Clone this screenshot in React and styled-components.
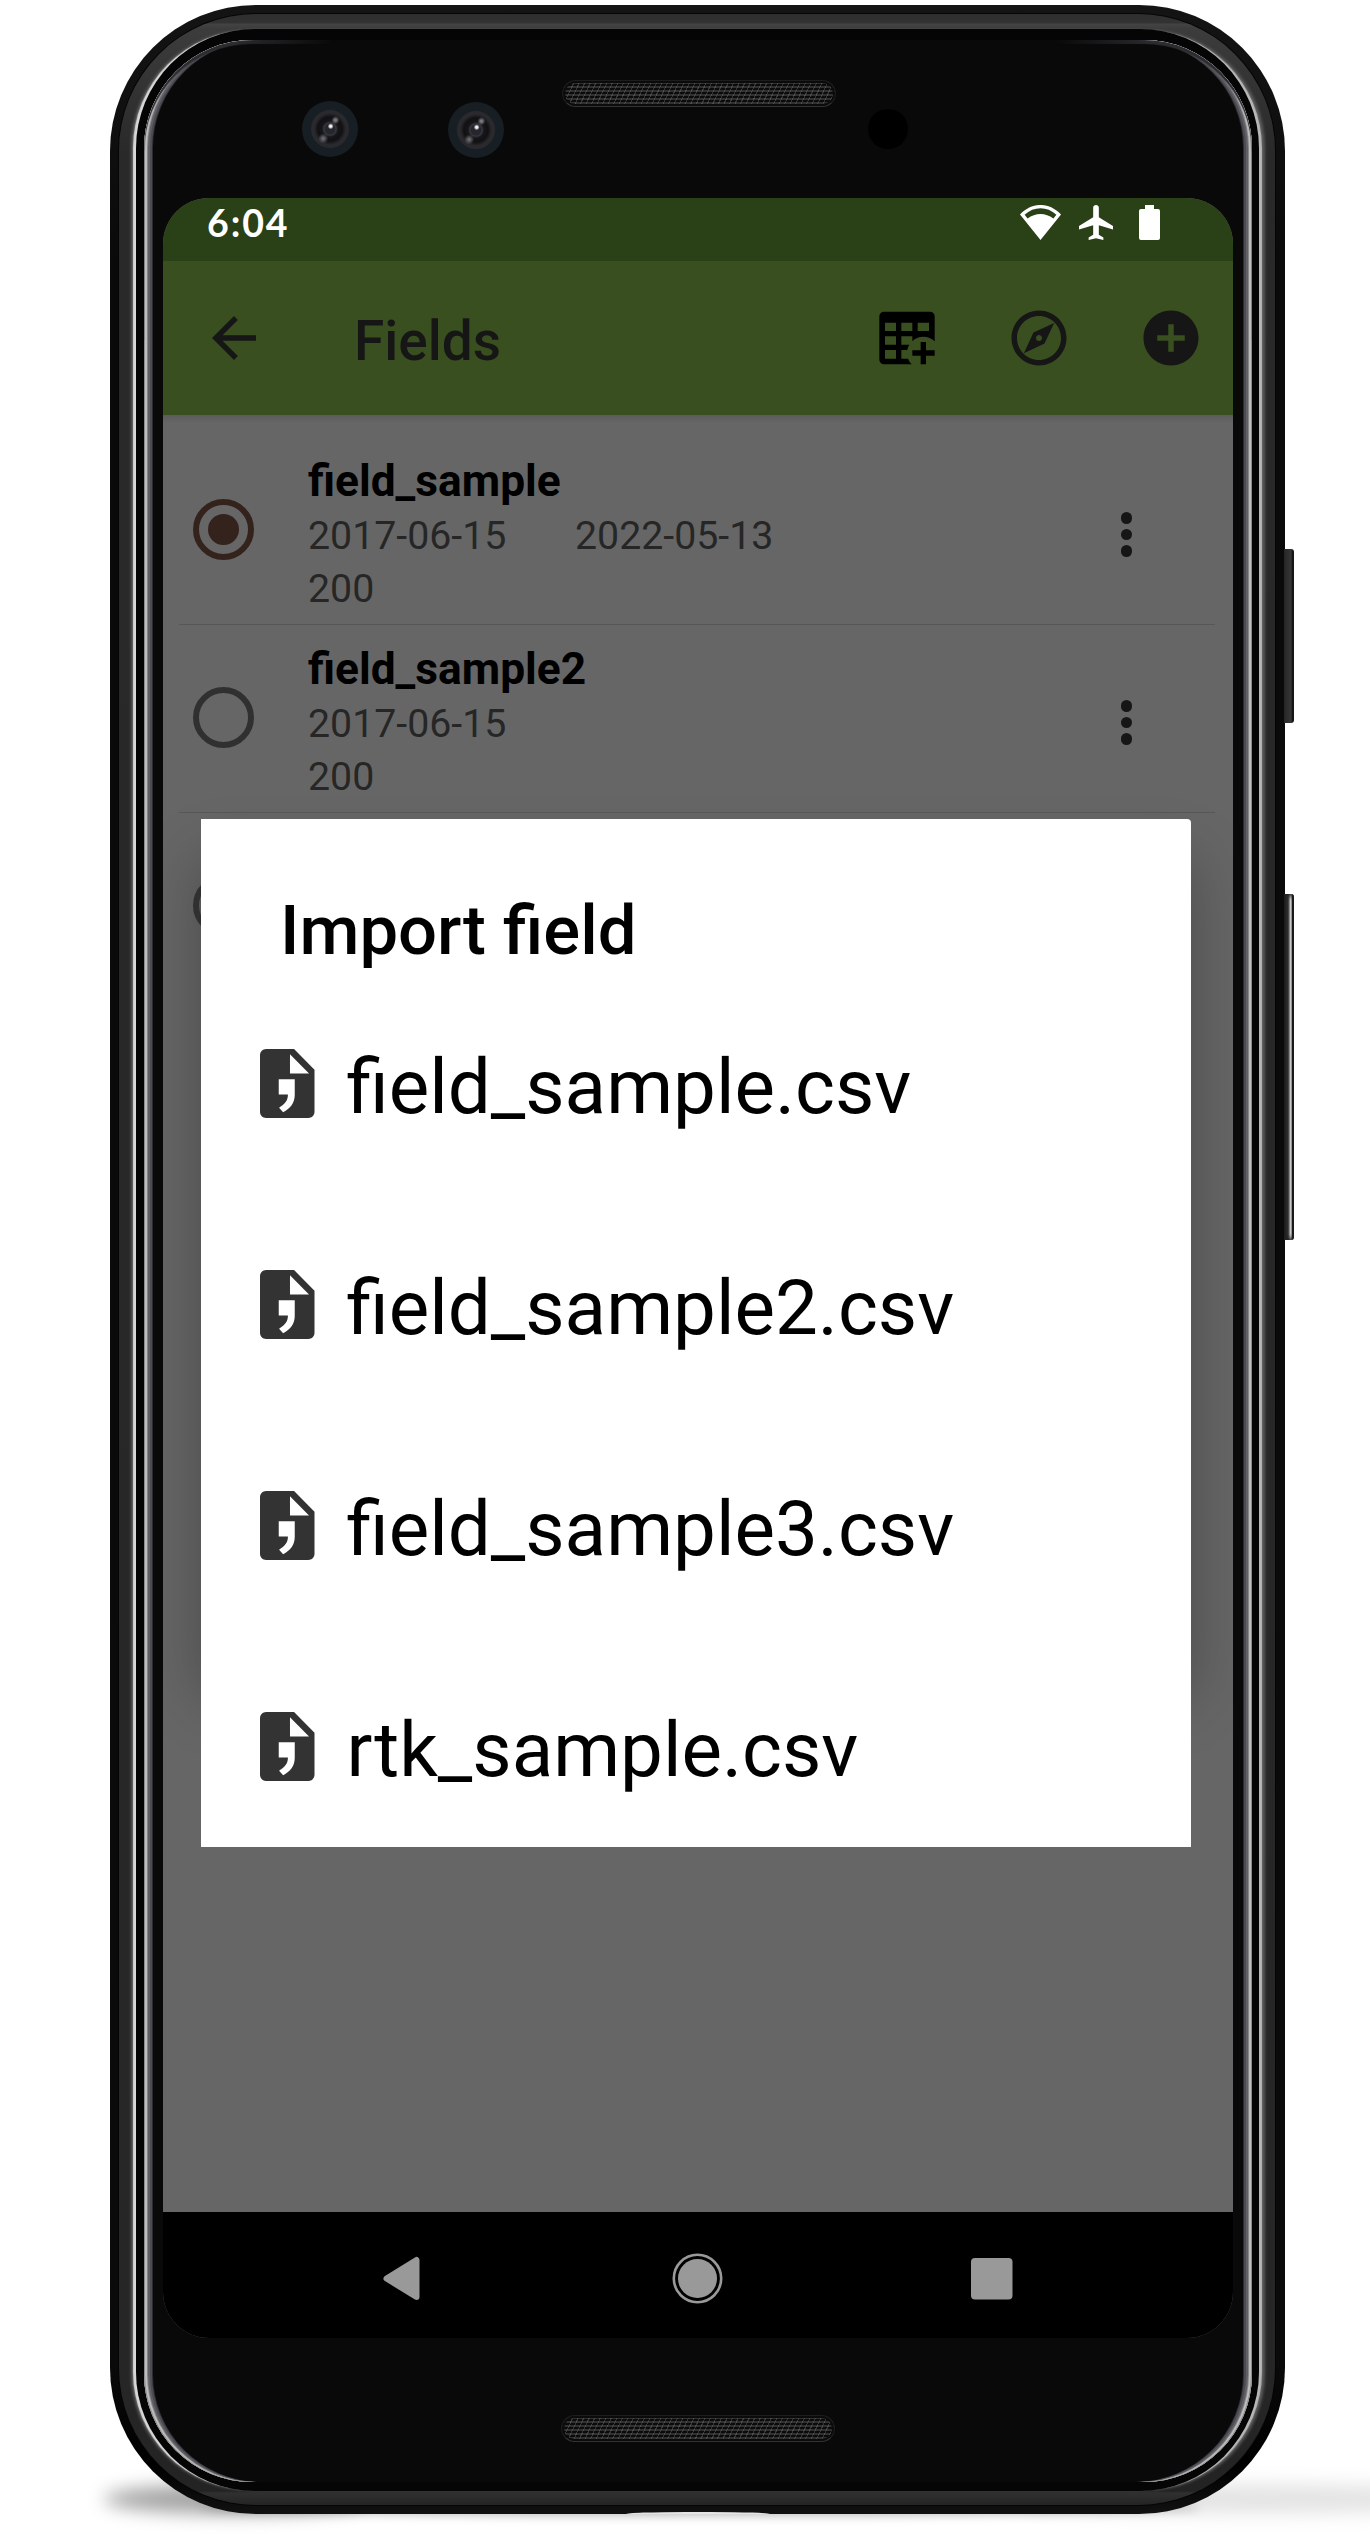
import React from "react";
import styled, { createGlobalStyle, css } from "styled-components";

const GlobalStyle = createGlobalStyle`
  *, *::before, *::after { box-sizing: border-box; }
  body { margin: 0; background: #fff; font-family: Roboto, "Noto Sans", sans-serif; }
`;

const Stage = styled.main`
  position: relative;
  width: 1370px;
  height: 2534px;
  padding: 5px 85px 0 110px;
  overflow: hidden;
  background: #fff;
`;

const FloorShadow = styled.div`
  position: absolute;
  left: ${(p) => p.$left}px;
  top: ${(p) => p.$top}px;
  width: ${(p) => p.$width}px;
  height: ${(p) => p.$height}px;
  border-radius: 50%;
  background: rgba(0, 0, 0, ${(p) => p.$strength});
  filter: blur(${(p) => p.$blur}px);
`;

const Body = styled.div`
  position: relative;
  width: 1175px;
  height: 2509px;
  padding: 9px 10px 9px 9px;
  border-radius: 146px;
  background: linear-gradient(#141414, #0a0a0a 10%, #0a0a0a 94%, #000 98%, #111);
`;

const Rim = styled.div`
  height: 100%;
  padding: 15px 16px 14px 17px;
  border-radius: 137px;
  background: linear-gradient(#2e2e2e, #333 9px, #434343 10px, #3c3c3c 15px, #292929 140px, #262626 2380px, #232323 2477px, #303030 2479px, #242424);
  box-shadow: 0 0 0 1px #050505;
`;

const Gap = styled.div`
  height: 100%;
  padding: 11px 7px 9px 8px;
  border-radius: 119px;
  background: #050505;
  box-shadow: -4px 0 1px -1px #d8d8d8, 4px 0 1px -1px #b8b8b8, -6px 0 3px -1px #5a5a5a, 7px 0 3px -1px #5a5a5a;
`;

const Glass = styled.div`
  position: relative;
  display: flex;
  flex-direction: column;
  height: 100%;
  padding: 0 19px;
  border-radius: 108px;
  background: #090909;
  box-shadow:
    inset 1px 0 #8c8c8c, inset -1px 0 #8c8c8c,
    inset 3px 0 #bdbdbd, inset -3px 0 #bdbdbd,
    inset 4px 0 #858588, inset -4px 0 #858588,
    inset 6px 0 #5f5f65, inset -6px 0 #5f5f65,
    inset 8px 0 #4b4b52, inset -8px 0 #4b4b52,
    inset 9px 0 #2c2c30, inset -9px 0 #2c2c30;

  &::before {
    content: "";
    position: absolute;
    inset: 0;
    height: 300px;
    border-radius: 108px 108px 0 0;
    box-shadow: inset 0 4px 1px #2c2c31;
    mask-image: linear-gradient(to right, #000 90px, transparent 190px, transparent 910px, #000 1010px);
  }
`;

const TopBezel = styled.div`
  display: flex;
  flex: none;
  align-items: flex-start;
  height: 158px;
  padding-left: 139px;
`;

const Lens = styled.div`
  flex: none;
  width: 56px;
  height: 56px;
  margin-top: ${(p) => p.$drop}px;
  margin-right: ${(p) => p.$after}px;
  padding: 9px;
  border-radius: 50%;
  background: #171e24;
`;

const LensGlass = styled.div`
  height: 38px;
  border-radius: 50%;
  border: 2px solid #2a2a2e;
  background:
    radial-gradient(circle at 52% 42%, #f5f5f5 0 1px, transparent 3px),
    radial-gradient(circle at 66% 24%, #77777c 0 1px, transparent 4px),
    radial-gradient(circle at 30% 78%, #66666b 0 1px, transparent 5px),
    radial-gradient(circle, #26262e 0 5px, #38383e 6px, #17171b 8px, #111114 12px, #2b2b2f 16px);
`;

const Speaker = styled.div`
  flex: none;
  width: 274px;
  height: 27px;
  margin-top: ${(p) => p.$drop}px;
  border: 1px solid #1d1d1d;
  border-bottom-color: #333;
  border-radius: 14px;
  background:
    repeating-linear-gradient(115deg, rgba(150, 150, 150, 0.3) 0 1px, transparent 1px 5px),
    repeating-linear-gradient(0deg, #0b0b0b 0 2px, #303030 2px 4px);
  box-shadow: inset 0 0 0 2px #0b0b0b;
`;

const Sensor = styled.div`
  width: 40px;
  height: 40px;
  margin: 69px 0 0 32px;
  border-radius: 50%;
  background: #000;
`;

const BottomBezel = styled.div`
  display: flex;
  justify-content: center;
  flex: 1;
`;

const SideButton = styled.div`
  position: absolute;
  left: 1174px;
  top: ${(p) => p.$top}px;
  width: 10px;
  height: ${(p) => p.$height}px;
  border-radius: 0 3px 3px 0;
  ${(p) =>
    p.$shiny
      ? css`
          background: linear-gradient(to right, #1c1c1c, #2c2c2c 35%, #555 50%, #cfcfcf 62%, #bcbcbc 72%, #1a1a1a 84%);
          box-shadow: inset 0 5px 4px -3px #222, inset 0 -5px 4px -3px #222;
        `
      : css`
          background: linear-gradient(to right, #262626, #363636 70%, #161616 85%);
        `}
`;

const PortNotch = styled.div`
  position: absolute;
  left: 516px;
  bottom: 0;
  width: 144px;
  height: 2px;
  border-radius: 60px 60px 0 0 / 2px 2px 0 0;
  background: #e6e4e4;
`;

const Screen = styled.div`
  display: flex;
  flex: none;
  flex-direction: column;
  height: 2140px;
  border-radius: 46px;
  overflow: hidden;
  background: #666;
`;

const StatusBar = styled.header`
  display: flex;
  flex: none;
  align-items: flex-start;
  height: 63px;
  padding: 7px 65px 0 44px;
  background: #2a4118;
`;

const Clock = styled.span`
  margin-right: auto;
  margin-top: -4px;
  color: #fff;
  font-family: Lato, "Open Sans", sans-serif;
  font-weight: 700;
  font-size: 37.5px;
  line-height: 44px;
  letter-spacing: 1.9px;
`;

const StatusIcons = styled.div`
  display: flex;
  gap: 18px;
  svg { display: block; }
`;

const Toolbar = styled.div`
  display: flex;
  flex: none;
  align-items: center;
  height: 154px;
  padding: 0 29px 0 38px;
  background: #394f1f;
`;

const Glyph = styled.svg`
  display: block;
  flex: none;
  width: 66px;
  height: 66px;
  fill: ${(p) => p.$color || "#161616"};
`;

const ToolbarTitle = styled.h1`
  flex: 1;
  margin: 6px 0 0 87px;
  color: #161616;
  font-weight: 500;
  font-size: 55px;
  line-height: 64px;
`;

const Actions = styled.div`
  display: flex;
  gap: 66px;
`;

const Content = styled.section`
  position: relative;
  z-index: 0;
  flex: none;
  height: 1797px;
  padding: 22px 18px 0 16px;
  background: linear-gradient(#5b5b5b, #666 8px);
`;

const FieldRow = styled.div`
  display: flex;
  align-items: flex-start;
  height: 188px;
  border-bottom: 1px solid ${(p) => (p.$last ? "transparent" : "#575757")};
`;

const Radio = styled.div`
  display: grid;
  place-items: center;
  flex: none;
  width: 61px;
  height: 61px;
  margin: 62px 54px 0 14px;
  border: 6px solid ${(p) => (p.$checked ? "#34231d" : "#303030")};
  border-radius: 50%;
  &::after {
    content: "";
    width: 31px;
    height: 31px;
    border-radius: 50%;
    background: ${(p) => (p.$checked ? "#34231d" : "transparent")};
  }
`;

const FieldInfo = styled.div`
  flex: 1;
  padding-top: 19px;
`;

const FieldName = styled.div`
  color: #000;
  font-weight: 700;
  font-size: 44.3px;
  line-height: 50px;
  height: 54px;
`;

const FieldMeta = styled.div`
  display: flex;
  color: #262626;
  font-size: 39.3px;
  line-height: 53px;
`;

const Stamp = styled.span`
  width: 267px;
`;

const Kebab = styled.div`
  display: grid;
  gap: 5px;
  margin: 75px 83px 0 0;
`;

const Dot = styled.i`
  width: 11.5px;
  height: 11.5px;
  border-radius: 50%;
  background: #161616;
`;

const Dialog = styled.div`
  position: absolute;
  left: 38px;
  top: 404px;
  width: 990px;
  height: 1027.5px;
  padding: 77px 0 0 59px;
  border-radius: 0 4px 0 0;
  background: #fff;

  &::before {
    content: "";
    position: absolute;
    z-index: -1;
    inset: 40px 0 150px 0;
    box-shadow: 0 0 56px rgba(0, 0, 0, 0.28);
  }
`;

const DialogTitle = styled.h2`
  height: 153px;
  margin: 0 0 0 20px;
  color: #000;
  font-weight: 500;
  font-size: 68.8px;
  line-height: 70px;
`;

const FileRow = styled.div`
  display: flex;
  align-items: flex-start;
  height: 221px;
`;

const FileIcon = styled.svg`
  display: block;
  flex: none;
  width: 54.5px;
  height: 69px;
  margin-right: 32px;
  fill: #333;
`;

const FileName = styled.span`
  color: #000;
  font-size: 76.3px;
  line-height: 77px;
`;

const NavBar = styled.nav`
  display: grid;
  flex: none;
  grid-template-columns: repeat(3, 295px);
  justify-content: center;
  justify-items: center;
  padding-top: 33px;
  height: 126px;
  background: #000;
`;

const files = ["field_sample.csv", "field_sample2.csv", "field_sample3.csv", "rtk_sample.csv"];

const fields = [
  { name: "field_sample", imported: "2017-06-15", exported: "2022-05-13", count: 200, active: true },
  { name: "field_sample2", imported: "2017-06-15", count: 200 },
];

function TableAddIcon() {
  return (
    <Glyph viewBox="42 919 198 198" $color="#000">
      <mask id="badge-cut">
        <rect x="42" y="919" width="198" height="198" fill="#fff" />
        <circle cx="190" cy="1063" r="49" fill="#000" />
      </mask>
      <path
        mask="url(#badge-cut)"
        fillRule="evenodd"
        d="M72 939H210A14 14 0 0 1 224 953V1097H72A14 14 0 0 1 58 1083V953A14 14 0 0 1 72 939ZM75 972V997H108V972ZM124 972V997H157V972ZM173 972V997H207V972ZM75 1013V1038H108V1013ZM124 1013V1038H157V1013ZM75 1054V1080H108V1054ZM124 1054V1080H157V1054Z"
      />
      <path d="M182 1030h16v25h26v16h-26v26h-16v-26h-25v-16h25z" />
    </Glyph>
  );
}

function CompassIcon() {
  return (
    <Glyph viewBox="0 0 24 24">
      <path
        fillRule="evenodd"
        d="M12 2C6.48 2 2 6.48 2 12s4.48 10 10 10 10-4.48 10-10S17.52 2 12 2zm0 18c-4.41 0-8-3.59-8-8s3.59-8 8-8 8 3.59 8 8-3.59 8-8 8z"
      />
      <path
        fillRule="evenodd"
        d="M6.5 17.5l7.51-3.49L17.5 6.5 9.99 9.99zM12 10.9c.61 0 1.1.49 1.1 1.1s-.49 1.1-1.1 1.1-1.1-.49-1.1-1.1.49-1.1 1.1-1.1z"
      />
    </Glyph>
  );
}

function Field({ field }) {
  return (
    <FieldRow>
      <Radio $checked={field.active} />
      <FieldInfo>
        <FieldName>{field.name}</FieldName>
        <FieldMeta>
          <Stamp>{field.imported}</Stamp>
          {field.exported && <span>{field.exported}</span>}
        </FieldMeta>
        <FieldMeta>{field.count}</FieldMeta>
      </FieldInfo>
      <Kebab><Dot /><Dot /><Dot /></Kebab>
    </FieldRow>
  );
}

function ImportDialog() {
  return (
    <Dialog>
      <DialogTitle>Import field</DialogTitle>
      {files.map((name) => (
        <FileRow key={name}>
          <FileIcon viewBox="4 2 16 20" preserveAspectRatio="none">
            <path
              fillRule="evenodd"
              d="M14 2H5.8C4.8 2 4 2.8 4 3.8V20.2C4 21.2 4.8 22 5.8 22H18.2C19.2 22 20 21.2 20 20.2V8L14 2M12.8 3.5L18.4 9.1H12.8V3.5M9.5 10.8H14.2V15.3C14.2 17.6 12.9 19.2 10.8 20.3L9.6 19C11.3 18 12.2 17 12.2 15.2H9.5Z"
            />
          </FileIcon>
          <FileName>{name}</FileName>
        </FileRow>
      ))}
    </Dialog>
  );
}

export default function App() {
  return (
    <Stage>
      <GlobalStyle />
      <FloorShadow $left={104} $top={2484} $width={260} $height={30} $strength={0.36} $blur={9} />
      <FloorShadow $left={1020} $top={2486} $width={480} $height={26} $strength={0.12} $blur={10} />
      <FloorShadow $left={200} $top={2500} $width={1000} $height={16} $strength={0.25} $blur={5} />
      <Body>
        <SideButton $top={544} $height={174} />
        <SideButton $top={889} $height={346} $shiny />
        <Rim>
          <Gap>
            <Glass>
              <TopBezel>
                <Lens $drop={61} $after={90}><LensGlass /></Lens>
                <Lens $drop={62} $after={58}><LensGlass /></Lens>
                <Speaker $drop={40} />
                <Sensor />
              </TopBezel>
              <Screen>
                <StatusBar>
                  <Clock>6:04</Clock>
                  <StatusIcons>
                    <svg width="41" height="35" viewBox="0 0 41 35">
                      <path
                        fill="#fff"
                        fillRule="evenodd"
                        d="M0 9.5C12-3.2 29-3.2 41 9.5L20.5 35ZM4.6 9.8L7.6 13.6C15.5 7.6 25.5 7.6 33.4 13.6L36.4 9.8C27 1.2 14 1.2 4.6 9.8Z"
                      />
                    </svg>
                    <svg width="34" height="35" viewBox="2.5 2 18 20" preserveAspectRatio="none">
                      <path fill="#fff" d="M20.5 16v-2l-7.5-5V3.5c0-.83-.67-1.5-1.5-1.5S10 2.67 10 3.5V9l-7.5 5v2l7.5-2.5V19l-2.4 1.5V22l3.9-1 3.9 1v-1.5L13 19v-5.5l7.5 2.5z" />
                    </svg>
                    <svg width="37" height="35" viewBox="0 0 37 35">
                      <path fill="#fff" d="M14 0h9v4h4a2 2 0 0 1 2 2v27a2 2 0 0 1-2 2H10a2 2 0 0 1-2-2V6a2 2 0 0 1 2-2h4z" />
                    </svg>
                  </StatusIcons>
                </StatusBar>
                <Toolbar>
                  <Glyph viewBox="0 0 24 24">
                    <path d="M20 11H7.83l5.59-5.59L12 4l-8 8 8 8 1.41-1.41L7.83 13H20v-2z" />
                  </Glyph>
                  <ToolbarTitle>Fields</ToolbarTitle>
                  <Actions>
                    <TableAddIcon />
                    <CompassIcon />
                    <Glyph viewBox="0 0 24 24">
                      <path d="M12 2C6.48 2 2 6.48 2 12s4.48 10 10 10 10-4.48 10-10S17.52 2 12 2zm5 11h-4v4h-2v-4H7v-2h4V7h2v4h4v2z" />
                    </Glyph>
                  </Actions>
                </Toolbar>
                <Content>
                  {fields.map((field) => (
                    <Field key={field.name} field={field} />
                  ))}
                  <FieldRow $last>
                    <Radio />
                  </FieldRow>
                  <ImportDialog />
                </Content>
                <NavBar>
                  <Glyph viewBox="0 0 66 66" $color="#999">
                    <path d="M46.5 15V52L16.5 33.5Z" stroke="#999" strokeWidth="6" strokeLinejoin="round" />
                  </Glyph>
                  <Glyph viewBox="0 0 66 66" $color="#999">
                    <circle cx="32.5" cy="33.5" r="19.5" />
                    <circle cx="32.5" cy="33.5" r="23.7" fill="none" stroke="#999" strokeWidth="2.6" />
                  </Glyph>
                  <Glyph viewBox="0 0 66 66" $color="#999">
                    <rect x="11" y="13" width="41.5" height="41.5" rx="4" />
                  </Glyph>
                </NavBar>
              </Screen>
              <BottomBezel><Speaker $drop={77} /></BottomBezel>
            </Glass>
          </Gap>
        </Rim>
        <PortNotch />
      </Body>
    </Stage>
  );
}
